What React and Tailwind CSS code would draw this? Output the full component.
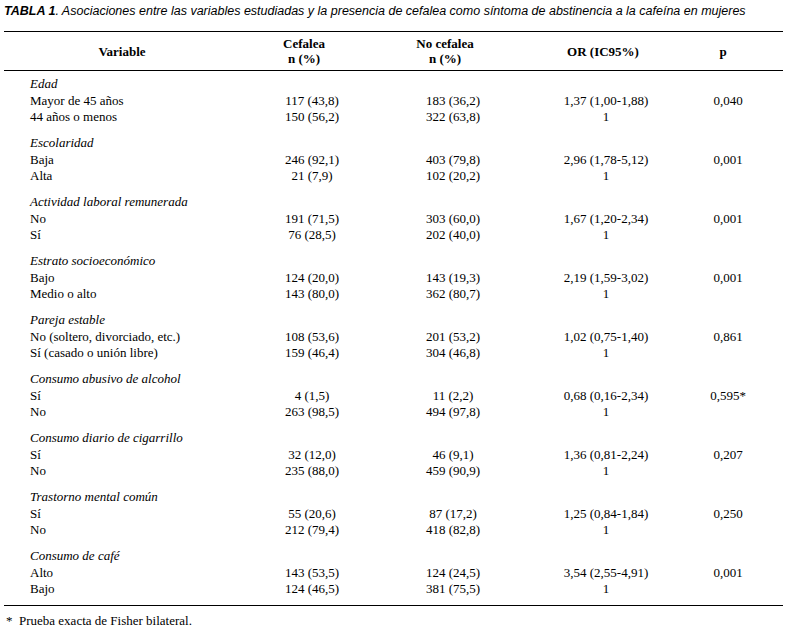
import React from "react";

const groups = [
  {
    name: "Edad",
    rows: [
      ["Mayor de 45 años", "117 (43,8)", "183 (36,2)", "1,37 (1,00-1,88)", "0,040"],
      ["44 años o menos", "150 (56,2)", "322 (63,8)", "1", ""],
    ],
  },
  {
    name: "Escolaridad",
    rows: [
      ["Baja", "246 (92,1)", "403 (79,8)", "2,96 (1,78-5,12)", "0,001"],
      ["Alta", "21 (7,9)", "102 (20,2)", "1", ""],
    ],
  },
  {
    name: "Actividad laboral remunerada",
    rows: [
      ["No", "191 (71,5)", "303 (60,0)", "1,67 (1,20-2,34)", "0,001"],
      ["Sí", "76 (28,5)", "202 (40,0)", "1", ""],
    ],
  },
  {
    name: "Estrato socioeconómico",
    rows: [
      ["Bajo", "124 (20,0)", "143 (19,3)", "2,19 (1,59-3,02)", "0,001"],
      ["Medio o alto", "143 (80,0)", "362 (80,7)", "1", ""],
    ],
  },
  {
    name: "Pareja estable",
    rows: [
      ["No (soltero, divorciado, etc.)", "108 (53,6)", "201 (53,2)", "1,02 (0,75-1,40)", "0,861"],
      ["Sí (casado o unión libre)", "159 (46,4)", "304 (46,8)", "1", ""],
    ],
  },
  {
    name: "Consumo abusivo de alcohol",
    rows: [
      ["Sí", "4 (1,5)", "11 (2,2)", "0,68 (0,16-2,34)", "0,595*"],
      ["No", "263 (98,5)", "494 (97,8)", "1", ""],
    ],
  },
  {
    name: "Consumo diario de cigarrillo",
    rows: [
      ["Sí", "32 (12,0)", "46 (9,1)", "1,36 (0,81-2,24)", "0,207"],
      ["No", "235 (88,0)", "459 (90,9)", "1", ""],
    ],
  },
  {
    name: "Trastorno mental común",
    rows: [
      ["Sí", "55 (20,6)", "87 (17,2)", "1,25 (0,84-1,84)", "0,250"],
      ["No", "212 (79,4)", "418 (82,8)", "1", ""],
    ],
  },
  {
    name: "Consumo de café",
    rows: [
      ["Alto", "143 (53,5)", "124 (24,5)", "3,54 (2,55-4,91)", "0,001"],
      ["Bajo", "124 (46,5)", "381 (75,5)", "1", ""],
    ],
  },
];

const cols = "grid grid-cols-[236px_144px_138px_168px_76px_1fr]";

export default function App() {
  return (
    <div className="w-[790px] h-[631px] bg-white text-black font-['Liberation_Serif',serif] text-[13px] px-[4px] pt-[3px] overflow-hidden">
      {/* Caption */}
      <p className="font-['Liberation_Sans',sans-serif] italic text-[12.5px] leading-[16px] whitespace-nowrap">
        <span className="font-bold">TABLA 1</span>. Asociaciones entre las variables estudiadas y la presencia de cefalea como síntoma de abstinencia a la cafeína en mujeres
      </p>

      <div className="w-[779px] mt-[12px]">
        {/* Header */}
        <div className={`${cols} border-t-[1.5px] border-b-[1.5px] border-black h-[40px] items-center font-bold leading-[15px]`}>
          <div className="text-center">Variable</div>
          <div className="text-center pr-[16px]">
            Cefalea
            <br />
            n (%)
          </div>
          <div className="text-center pr-[16px]">
            No cefalea
            <br />
            n (%)
          </div>
          <div className="text-center pr-[6px]">OR (IC95%)</div>
          <div className="text-center pr-[10px]">p</div>
          <div />
        </div>

        {/* Body */}
        <div className="pt-[5px] pb-[7px] border-b-[1.5px] border-black flex flex-col gap-[9.5px] leading-[16.5px]">
          {groups.map((g) => (
            <div key={g.name}>
              <div className="pl-[26px] italic">{g.name}</div>
              {g.rows.map((r, i) => (
                <div key={i} className={cols}>
                  <div className="pl-[26px] whitespace-nowrap">{r[0]}</div>
                  <div className="text-center">{r[1]}</div>
                  <div className="text-center">{r[2]}</div>
                  <div className="text-center">{r[3]}</div>
                  <div className="text-center">{r[4]}</div>
                  <div />
                </div>
              ))}
            </div>
          ))}
        </div>

        {/* Footnote */}
        <p className="mt-[7px] leading-[16px] pl-[2px]">
          *&nbsp;&nbsp;Prueba exacta de Fisher bilateral.
        </p>
      </div>
    </div>
  );
}
